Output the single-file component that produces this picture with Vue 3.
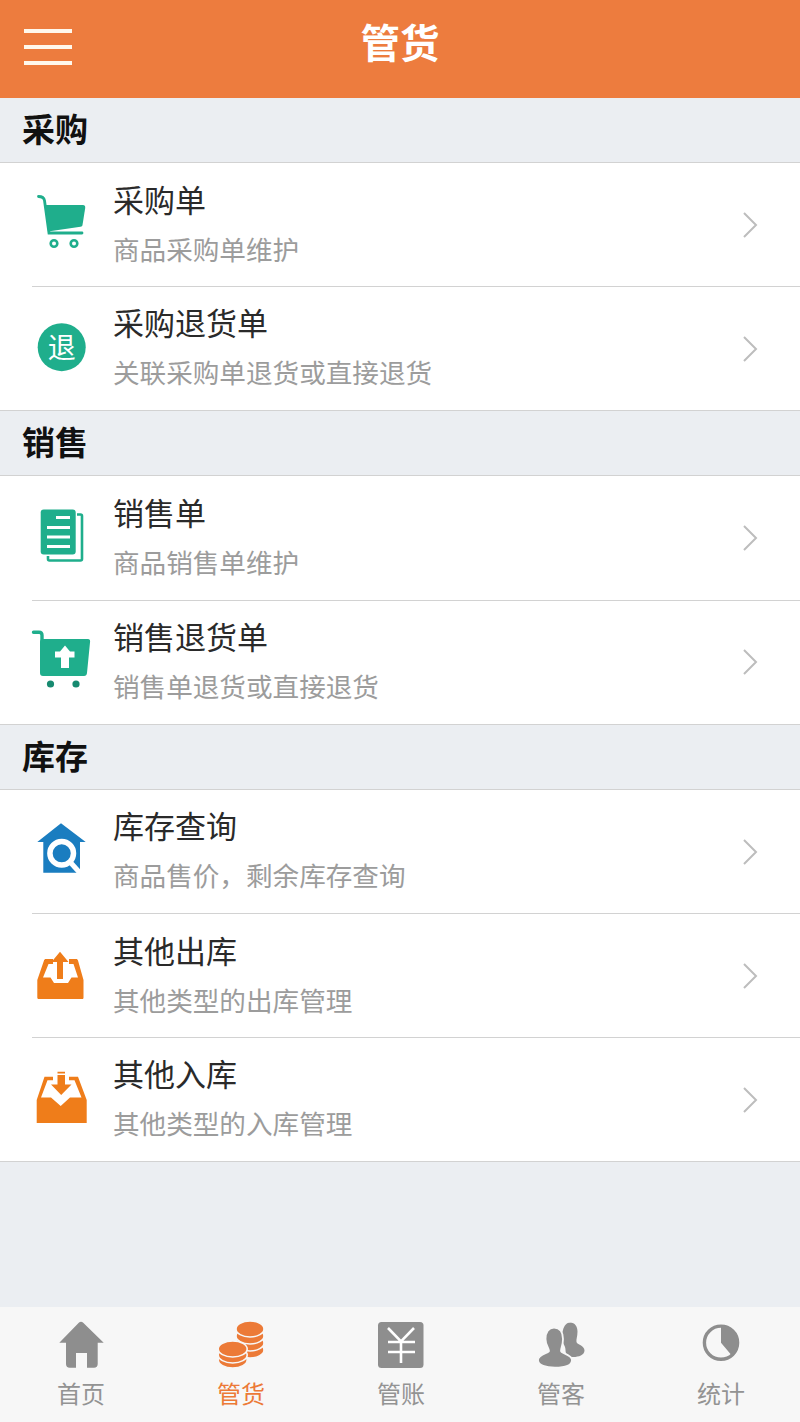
<template>
  <div class="page">
    <header class="top-bar">
      <div class="menu"><span></span><span></span><span></span></div>
      <h1 class="top-title">管货</h1>
    </header>

    <section v-for="group in groups" :key="group.name">
      <h2 class="group-title">{{ group.name }}</h2>
      <div
        v-for="(item, index) in group.items"
        :key="item.title"
        class="row"
        :class="{ last: index === group.items.length - 1 }"
      >
        <svg class="row-icon" viewBox="0 0 64 64">
          <g v-if="item.icon === 'cart'">
            <path d="M8.500 3.500c3.500 0 5.500 1 6 4l4.500 32.500H52" fill="none" stroke="#1FAE8C" stroke-width="2.800" stroke-linecap="round" />
            <path d="M15.500 12H53c1.500 0 2.500 1 2.200 3L52.500 32c-.2 1-.8 1.500-2 1.700L18 38.500z" fill="#1FAE8C" />
            <circle cx="24" cy="50.500" r="3.300" fill="none" stroke="#1FAE8C" stroke-width="2.600" />
            <circle cx="44" cy="50.500" r="3.300" fill="none" stroke="#1FAE8C" stroke-width="2.600" />
          </g>
          <g v-else-if="item.icon === 'back'">
            <circle cx="31.700" cy="30.200" r="24" fill="#1FAE8C" />
            <text x="31.700" y="40.500" class="back-glyph" text-anchor="middle">退</text>
          </g>
          <g v-else-if="item.icon === 'doc'">
            <path d="M47 8.500h3.500c1 0 1.500.5 1.500 1.500v43c0 1-.5 1.500-1.500 1.500H19.500c-1 0-1.500-.5-1.500-1.500v-3" fill="none" stroke="#1FAE8C" stroke-width="2.600" />
            <rect x="10.700" y="3.500" width="35" height="45" rx="3" fill="#1FAE8C" />
            <path d="M26 11.500h14M17 21.500h23M17 31h23M17 40.500h23" stroke="#fff" stroke-width="3" />
          </g>
          <g v-else-if="item.icon === 'cartBack'">
            <path d="M3.500 2.200h5.500c2 0 3 1 3 3V12" fill="none" stroke="#1FAE8C" stroke-width="3.400" stroke-linecap="round" />
            <path d="M13 9h45c1.500 0 2.300 1 2.100 2.500L57 43c-.2 2-1.200 3-3 3H13c-2 0-3-1-3-3V12c0-2 1-3 3-3z" fill="#1FAE8C" />
            <path d="M35 15.500l5 6h4.500v6H39V38h-8V27.500h-6v-6h5z" fill="#fff" />
            <circle cx="20.500" cy="54" r="3.600" fill="#178A70" />
            <circle cx="46" cy="54" r="3.600" fill="#178A70" />
          </g>
          <g v-else-if="item.icon === 'house'">
            <path d="M31 3.300L55.700 22H50V52.700H13.300V22H7.300z" fill="#1A7DC0" />
            <path d="M41 43l9 10" stroke="#fff" stroke-width="5" />
            <circle cx="31.700" cy="33.300" r="11.800" fill="#1A7DC0" stroke="#fff" stroke-width="5.500" />
          </g>
          <g v-else-if="item.icon === 'out'">
            <path d="M7.300 36L14 16.500c.3-1 1-1.500 2-1.500h7v5h-4.500L13 33.500h7.500L24 39h14l3.500-5.500H48L43.500 20H39v-5h7c1 0 1.700.5 2 1.500L53.500 36v17.500c0 1-.5 1.500-1.500 1.500H9c-1 0-1.700-.5-1.700-1.500z" fill="#EF7D1A" />
            <path d="M30 7.700l8.500 10.300h-5.500v17h-6V18h-5.500z" fill="#EF7D1A" />
          </g>
          <g v-else-if="item.icon === 'in'">
            <path d="M6.700 32L14.500 8.700H23v3.500h-5.500L11 29.500h10l9.700 8.500L40 29.500h11.500l-7-17.300H39V8.700h9L56.700 32v23H6.700z" fill="#EF7D1A" />
            <path d="M27.500 3.700H35v1.800h-7.500zM27.500 7H35v9.500h6.500L31.200 27 21 16.500h6.500z" fill="#EF7D1A" />
          </g>
        </svg>
        <div class="row-text">
          <div class="row-title">{{ item.title }}</div>
          <div class="row-sub">{{ item.sub }}</div>
        </div>
        <svg class="chevron" viewBox="0 0 16 28">
          <path d="M2 2l12 12L2 26" fill="none" stroke="#BDBDBD" stroke-width="2" />
        </svg>
      </div>
    </section>

    <nav class="tabs">
      <div v-for="tab in tabs" :key="tab.label" class="tab" :class="{ active: tab.active }">
        <svg class="tab-icon" viewBox="0 0 60 50">
          <path v-if="tab.icon === 'home'" d="M30 1.700c.8 0 1.500.4 2.200 1.100l20.500 19.900H46.700V44c0 2.400-1.300 3.700-3.700 3.700h-7V33H25v14.700h-6.300c-2.400 0-3.700-1.300-3.700-3.700V22.700H8.300L27.800 2.800c.7-.7 1.400-1.100 2.200-1.100z" fill="#8E8E8E" />
          <g v-else-if="tab.icon === 'coins'" fill="#EC7A37" stroke="#F7F7F7" stroke-width="1.600">
            <ellipse cx="39" cy="30" rx="14" ry="8" />
            <ellipse cx="39" cy="23" rx="14" ry="8" />
            <ellipse cx="39" cy="16" rx="14" ry="8" />
            <ellipse cx="39" cy="9" rx="14" ry="8" />
            <ellipse cx="21.700" cy="40" rx="14.500" ry="8" />
            <ellipse cx="21.700" cy="35" rx="14.500" ry="8" />
            <ellipse cx="21.700" cy="29" rx="14.500" ry="8" />
          </g>
          <g v-else-if="tab.icon === 'yen'">
            <rect x="7" y="2" width="45.500" height="46" rx="3.500" fill="#8E8E8E" />
            <path d="M17 8l13 13.500L43 8M17 22h27M17 32h27M30 21.500V43" fill="none" stroke="#fff" stroke-width="2.600" />
          </g>
          <g v-else-if="tab.icon === 'people'" fill="#8E8E8E">
            <path d="M39 2.500c5 0 7.500 4 7.500 9 0 5-1.500 8-1 10.500 .5 2.500 8 3.500 8 8.500 0 4.500-6 6.500-11 6.500-5 0-8-2-8-7 0-5-3.500-7-3.500-11 0-4 .2-6.500 1-9 1-4 3.500-7.500 7.500-7.500z" />
            <path d="M23 7.500c6 0 9 5 9 11.500 0 6-2 9-2 12 0 2.500 11 3.500 11 9 0 5.500-8 7.700-17 7.700C15 47.700 7 45.500 7 40c0-5.500 11-7 11-9 0-3-3.500-6-3.500-12 0-6.500 3-11.500 8.500-11.500z" stroke="#F7F7F7" stroke-width="1.800" />
          </g>
          <g v-else-if="tab.icon === 'stats'">
            <circle cx="30" cy="22.700" r="16.600" fill="none" stroke="#8E8E8E" stroke-width="3.400" />
            <path d="M30 22.700V5a17.700 17.700 0 0 1 11.400 31.300z" fill="#8E8E8E" />
          </g>
        </svg>
        <span class="tab-label">{{ tab.label }}</span>
      </div>
    </nav>
  </div>
</template>

<script setup>
const groups = [
  {
    name: '采购',
    items: [
      { icon: 'cart', title: '采购单', sub: '商品采购单维护' },
      { icon: 'back', title: '采购退货单', sub: '关联采购单退货或直接退货' }
    ]
  },
  {
    name: '销售',
    items: [
      { icon: 'doc', title: '销售单', sub: '商品销售单维护' },
      { icon: 'cartBack', title: '销售退货单', sub: '销售单退货或直接退货' }
    ]
  },
  {
    name: '库存',
    items: [
      { icon: 'house', title: '库存查询', sub: '商品售价，剩余库存查询' },
      { icon: 'out', title: '其他出库', sub: '其他类型的出库管理' },
      { icon: 'in', title: '其他入库', sub: '其他类型的入库管理' }
    ]
  }
]

const tabs = [
  { icon: 'home', label: '首页' },
  { icon: 'coins', label: '管货', active: true },
  { icon: 'yen', label: '管账' },
  { icon: 'people', label: '管客' },
  { icon: 'stats', label: '统计' }
]
</script>

<style>
body {
  background: #ebeef2;
}
</style>

<style scoped>
.page {
  display: flex;
  flex-direction: column;
  min-height: 1422px;
  background: #ebeef2;
  font-family: "Noto Sans CJK SC", "Liberation Sans", sans-serif;
}

.top-bar {
  display: flex;
  align-items: center;
  justify-content: center;
  position: relative;
  height: 98px;
  background: #ed7c3e;
}

.menu {
  position: absolute;
  left: 24px;
  top: 29px;
  display: flex;
  flex-direction: column;
  gap: 12.500px;
}

.menu span {
  display: block;
  width: 48px;
  height: 3.500px;
  background: #fff8ec;
}

.top-title {
  margin: 0 0 16px;
  font-size: 39.500px;
  line-height: 48px;
  font-weight: 700;
  color: #fff;
}

.group-title {
  margin: 0;
  height: 64px;
  padding-left: 22px;
  font-size: 33px;
  line-height: 61px;
  font-weight: 700;
  color: #111;
  background: #ebeef2;
  border-bottom: 1.500px solid #d2d2d2;
  box-sizing: content-box;
}

.row {
  display: flex;
  align-items: center;
  height: 124.200px;
  box-sizing: border-box;
  padding-left: 32px;
  background: #fff;
  position: relative;
}

.row:not(.last)::after {
  content: "";
  position: absolute;
  left: 32px;
  right: 0;
  bottom: 0;
  border-bottom: 1.500px solid #d2d2d2;
}

.row.last {
  border-bottom: 1.500px solid #d2d2d2;
}

.row-icon {
  flex: none;
  width: 64px;
  height: 64px;
  margin-left: -2px;
}

.back-glyph {
  font-size: 28px;
  fill: #fff;
}

.row-text {
  flex: 1;
  margin-left: 19px;
  padding-bottom: 5px;
}

.row-title {
  font-size: 31px;
  line-height: 36px;
  color: #2a2a2a;
}

.row-sub {
  margin-top: 16px;
  font-size: 26.600px;
  line-height: 32px;
  color: #9c9c9c;
}

.chevron {
  flex: none;
  width: 16px;
  height: 28px;
  margin-right: 42px;
}

.tabs {
  display: flex;
  margin-top: auto;
  height: 115px;
  background: #f7f7f7;
}

.tab {
  flex: 1;
  display: flex;
  flex-direction: column;
  align-items: center;
  padding-top: 13px;
  padding-left: 2px;
  color: #939393;
}

.tab.active {
  color: #ec7a37;
}

.tab-icon {
  width: 60px;
  height: 50px;
}

.tab-label {
  margin-top: 7px;
  font-size: 24px;
  line-height: 32px;
}
</style>
